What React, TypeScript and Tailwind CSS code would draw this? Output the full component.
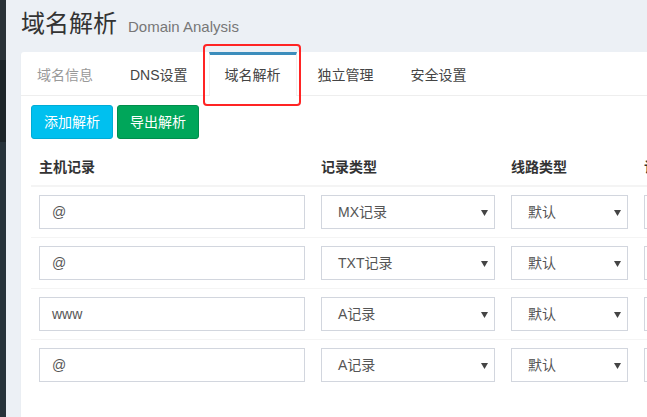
import React from "react";

const FONT = "font-['Liberation_Sans','Noto_Sans_CJK_SC',sans-serif]";

const tabs = [
  { label: "域名信息", muted: true },
  { label: "DNS设置" },
  { label: "域名解析", active: true },
  { label: "独立管理" },
  { label: "安全设置" },
];

const records = [
  { host: "@", type: "MX记录", line: "默认" },
  { host: "@", type: "TXT记录", line: "默认" },
  { host: "www", type: "A记录", line: "默认" },
  { host: "@", type: "A记录", line: "默认" },
];

const TextBox = ({ value }: { value: string }) => (
  <div className="h-[34px] border border-[#d2d6de] bg-white px-3 flex items-center text-[14px] text-[#555]">
    {value}
  </div>
);

const SelectBox = ({ value }: { value: string }) => (
  <div className="relative h-[34px] border border-[#d2d6de] bg-white pl-4 flex items-center text-[14px] text-[#555]">
    {value}
    <svg
      className="absolute right-[6px] top-[14px]"
      width="7"
      height="6"
      viewBox="0 0 7 6"
    >
      <path d="M0 0H7L3.5 6Z" fill="#444" />
    </svg>
  </div>
);

export default function App() {
  return (
    <div className={`relative flex w-[647px] h-[417px] overflow-hidden ${FONT}`}>
      {/* sidebar edge */}
      <div className="w-[6px] shrink-0 flex flex-col">
        <div className="h-[60px] bg-[#2a3237]" />
        <div className="h-[82px] bg-[#1c2428]" />
        <div className="flex-1 bg-[#27333a]" />
      </div>

      <div className="flex-1 bg-[#ecf0f5] pl-[15px] overflow-hidden">
        <div className="h-[52px] pt-[12px] flex items-baseline">
          <h1 className="text-[24px] leading-[24px] text-[#333] ml-[-0px]">域名解析</h1>
          <span className="ml-[11px] text-[15px] text-[#777]">Domain Analysis</span>
        </div>

        <div className="w-[800px] h-[400px] bg-white rounded-tl-[3px] shadow-[0_1px_1px_rgba(0,0,0,0.1)]">
          <ul className="flex h-[44px] border-b border-[#eeeeee]">
            {tabs.map((t) => (
              <li
                key={t.label}
                className={`mr-[5px] px-[15px] h-[44px] border-x border-t-[3px] text-[14px] leading-5 pt-[10px] ${
                  t.active
                    ? "border-t-[#3c8dbc] border-x-[#f0f0f0] bg-white text-[#444]"
                    : "border-transparent"
                } ${t.muted ? "text-[#999]" : "text-[#444]"}`}
              >
                {t.label}
              </li>
            ))}
          </ul>

          <div className="px-[10px] pt-[9px]">
            <div className="flex gap-[4px]">
              <button className="h-[34px] px-3 rounded-[3px] border border-[#00acd6] bg-[#00c0ef] text-white text-[14px]">
                添加解析
              </button>
              <button className="h-[34px] px-3 rounded-[3px] border border-[#008d4c] bg-[#00a65a] text-white text-[14px]">
                导出解析
              </button>
            </div>

            <div className="mt-[10px] grid grid-cols-[282px_190px_133px_200px]">
              {["主机记录", "记录类型", "线路类型", "记录值"].map((h) => (
                <div
                  key={h}
                  className="px-2 py-2 leading-5 text-[14px] font-bold text-[#333] border-b-2 border-[#f4f4f4]"
                >
                  {h}
                </div>
              ))}
              {records.map((r, i) => (
                <React.Fragment key={i}>
                  <div className={`p-2 ${i > 0 ? "border-t border-[#f4f4f4]" : ""}`}>
                    <TextBox value={r.host} />
                  </div>
                  <div className={`p-2 ${i > 0 ? "border-t border-[#f4f4f4]" : ""}`}>
                    <SelectBox value={r.type} />
                  </div>
                  <div className={`p-2 ${i > 0 ? "border-t border-[#f4f4f4]" : ""}`}>
                    <SelectBox value={r.line} />
                  </div>
                  <div className={`p-2 ${i > 0 ? "border-t border-[#f4f4f4]" : ""}`}>
                    <TextBox value="" />
                  </div>
                </React.Fragment>
              ))}
            </div>
          </div>
        </div>
      </div>

      {/* highlight box around the active tab */}
      <div className="absolute left-[203px] top-[44px] w-[98px] h-[62px] border-2 border-[#ff2424] rounded-[4px]" />
    </div>
  );
}
